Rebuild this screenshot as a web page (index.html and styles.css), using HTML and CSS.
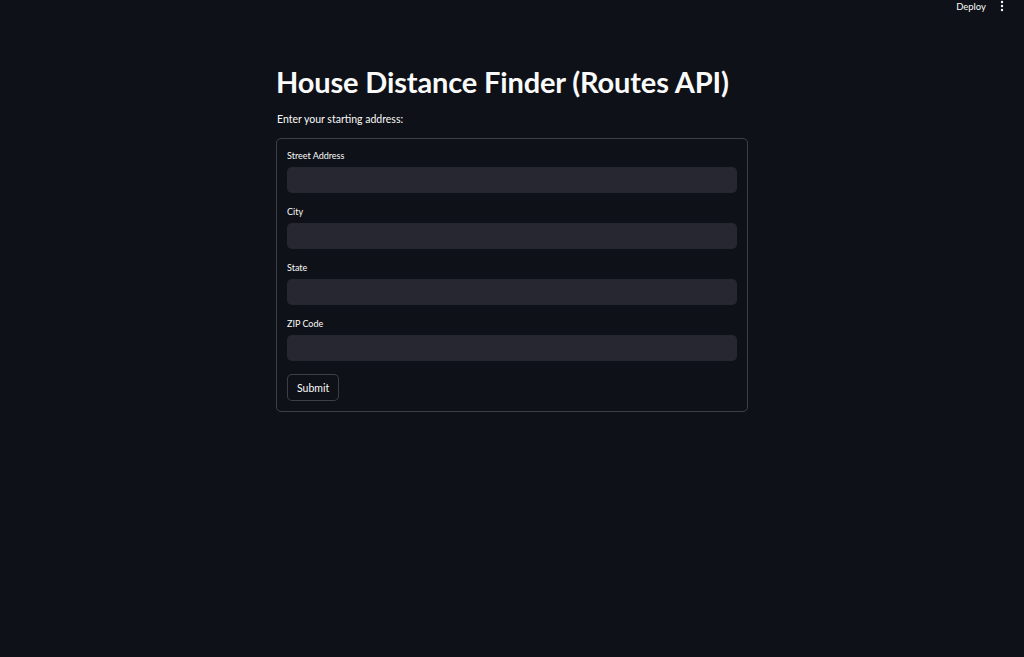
FILE: index.html
```html
<!DOCTYPE html>
<html lang="en">
<head>
  <meta charset="UTF-8" />
  <meta name="viewport" content="width=device-width, initial-scale=1.0"/>
  <title>House Distance Finder</title>
  <link rel="stylesheet" href="styles.css">
</head>
<body>
  <header class="toolbar">
    <span class="deploy">Deploy</span>
    <span class="menu">
      <svg width="4" height="12" viewBox="0 0 4 12"><circle cx="2" cy="2" r="1.2" fill="#fafafa"/><circle cx="2" cy="6" r="1.2" fill="#fafafa"/><circle cx="2" cy="10" r="1.2" fill="#fafafa"/></svg>
    </span>
  </header>

  <main class="main">
    <h1 class="title">House Distance Finder (Routes API)</h1>
    <p class="intro">Enter your starting address:</p>

    <!-- address form -->
    <form class="form">
      <div class="field">
        <label>Street Address</label>
        <input type="text">
      </div>
      <div class="field">
        <label>City</label>
        <input type="text">
      </div>
      <div class="field">
        <label>State</label>
        <input type="text">
      </div>
      <div class="field">
        <label>ZIP Code</label>
        <input type="text">
      </div>
      <button type="button" class="submit">Submit</button>
    </form>
  </main>
</body>
</html>
```

FILE: styles.css
```css
body {
  margin: 0;
  background-color: #0e1117;
  color: #fafafa;
  font-family: Lato, "Noto Sans", sans-serif;
  height: 657px;
  overflow: hidden;
}

.toolbar {
  height: 12px;
  display: flex;
  justify-content: flex-end;
  align-items: center;
  gap: 14px;
  padding-right: 20px;
}

.deploy {
  font-size: 9.5px;
  color: #fafafa;
}

.menu {
  display: flex;
  align-items: center;
}

.main {
  width: 472px;
  margin: 0 auto;
  padding-top: 52px;
}

.title {
  margin: 0;
  font-size: 29px;
  font-weight: 700;
  line-height: 36px;
  letter-spacing: -0.15px;
}

.intro {
  margin: 12px 0 0 1px;
  font-size: 10.5px;
  line-height: 14px;
}

.form {
  margin-top: 12px;
  border: 1px solid rgba(250, 250, 250, 0.2);
  border-radius: 5px;
  padding: 11px 10px 10px 10px;
  display: flex;
  flex-direction: column;
  gap: 13px;
}

.field {
  display: flex;
  flex-direction: column;
}

.field label {
  font-size: 9px;
  line-height: 12px;
  margin-bottom: 5px;
}

.field input {
  height: 26px;
  border: none;
  border-radius: 5px;
  background-color: #262730;
  color: #fafafa;
  padding: 0 8px;
  box-sizing: border-box;
}

.submit {
  align-self: flex-start;
  height: 27px;
  padding: 0 9px;
  background-color: #0e1117;
  color: #fafafa;
  border: 1px solid rgba(250, 250, 250, 0.2);
  border-radius: 5px;
  font-family: inherit;
  font-size: 10.5px;
}
```
